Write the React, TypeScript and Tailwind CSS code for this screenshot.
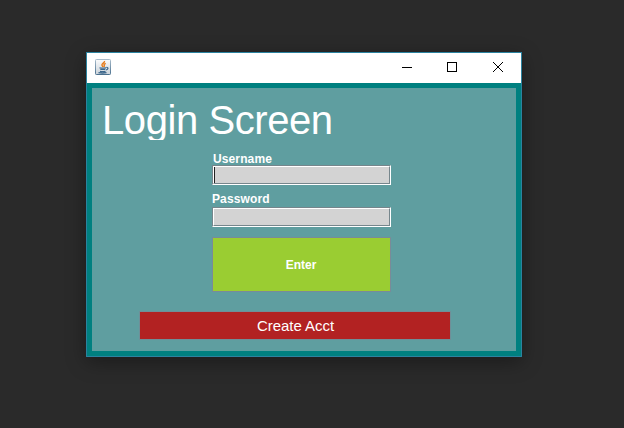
import React from "react";

function JavaIcon() {
  return (
    <svg width="16" height="16" viewBox="0 0 16 16" fill="none">
      <defs>
        <linearGradient id="tile" x1="0" y1="0" x2="0" y2="1">
          <stop offset="0" stopColor="#fafbfc" />
          <stop offset="1" stopColor="#cbd3da" />
        </linearGradient>
        <linearGradient id="edge" x1="0" y1="0" x2="0" y2="1">
          <stop offset="0" stopColor="#a9bccb" />
          <stop offset="1" stopColor="#4b718f" />
        </linearGradient>
      </defs>
      <rect x="0.5" y="0.5" width="15" height="15" rx="0.8" fill="url(#tile)" stroke="url(#edge)" />
      <path d="M9.500 2c.6 1.600-3 2.500-2.600 4 .1.700.9 1.200.9 2M10.700 4.300C9 5.200 8.700 5.700 9.300 6.500c.4.600 0 1.100-.6 1.500" stroke="#e67a18" strokeWidth="1.4" />
      <path d="M4.500 8.700c1.500.6 4.500.5 6.500.1M5.300 10.500h5M5 12.300c1.500.4 4 .3 5.500 0M3.500 13.700c2.500.5 6 .4 8 0M11.300 8.500c2.500-.4 2 2-.3 2.500" stroke="#3c678c" strokeWidth="1.200" />
    </svg>
  );
}

function TitleBar() {
  return (
    <div className="flex h-[30px] items-start justify-between bg-white pl-2 pt-1.5">
      <JavaIcon />
      <div className="flex pr-[17px] pt-[3px]">
        <svg width="102" height="12" viewBox="0 0 102 12" fill="none" stroke="#000" shapeRendering="crispEdges">
          <path d="M0 5.500H10" />
          <rect x="45.500" y="0.500" width="9" height="9" />
          <path d="M91 0L101 10M101 0L91 10" shapeRendering="auto" strokeWidth="1" />
        </svg>
      </div>
    </div>
  );
}

function Field({ caret }: { caret?: boolean }) {
  return (
    <div className="h-5 w-[179px] border border-b-white border-l-[#76868c] border-r-white border-t-[#76868c]">
      <div className="h-full border border-b-[#76868c] border-l-white border-r-[#76868c] border-t-white bg-[#d3d3d3]">
        {caret && <div className="h-full w-px bg-[#222]" />}
      </div>
    </div>
  );
}

export default function App() {
  return (
    <div className="h-[428px] w-[624px] overflow-hidden bg-[#2a2a2a] pl-[86px] pt-[52px] font-['Liberation_Sans',Arial,sans-serif] text-white">
      <div className="h-[305px] w-[436px] border border-[#2b83a0] bg-[#008080] shadow-[0_5px_18px_rgba(0,0,0,0.35)]">
        <TitleBar />
        <main className="mx-[5px] mt-[5px] h-[263px] bg-[#5f9ea0]">
          <h1 className="ml-2.5 h-[52px] overflow-hidden whitespace-nowrap pt-[9px] text-[40px] leading-[46px] tracking-[-0.42px]">Login Screen</h1>
          <div className="ml-[120px] flex w-[179px] flex-col pt-3 text-[12px] font-bold leading-[14px]">
            <label className="h-[13px] pl-px tracking-[0.12px]">Username</label>
            <Field caret />
            <label className="mt-[7px] h-[15px] tracking-[0.12px]">Password</label>
            <Field />
            <button className="mt-2.5 h-[55px] border border-[#7a8a99] bg-[#9acd32] pr-px font-bold">Enter</button>
          </div>
          <button className="ml-[47px] mt-[19px] block h-[29px] w-[312px] border border-[#6f8f98] bg-[#b22222] pl-px text-[15px] leading-[27px] tracking-[-0.03px]">
            Create Acct
          </button>
        </main>
      </div>
    </div>
  );
}
